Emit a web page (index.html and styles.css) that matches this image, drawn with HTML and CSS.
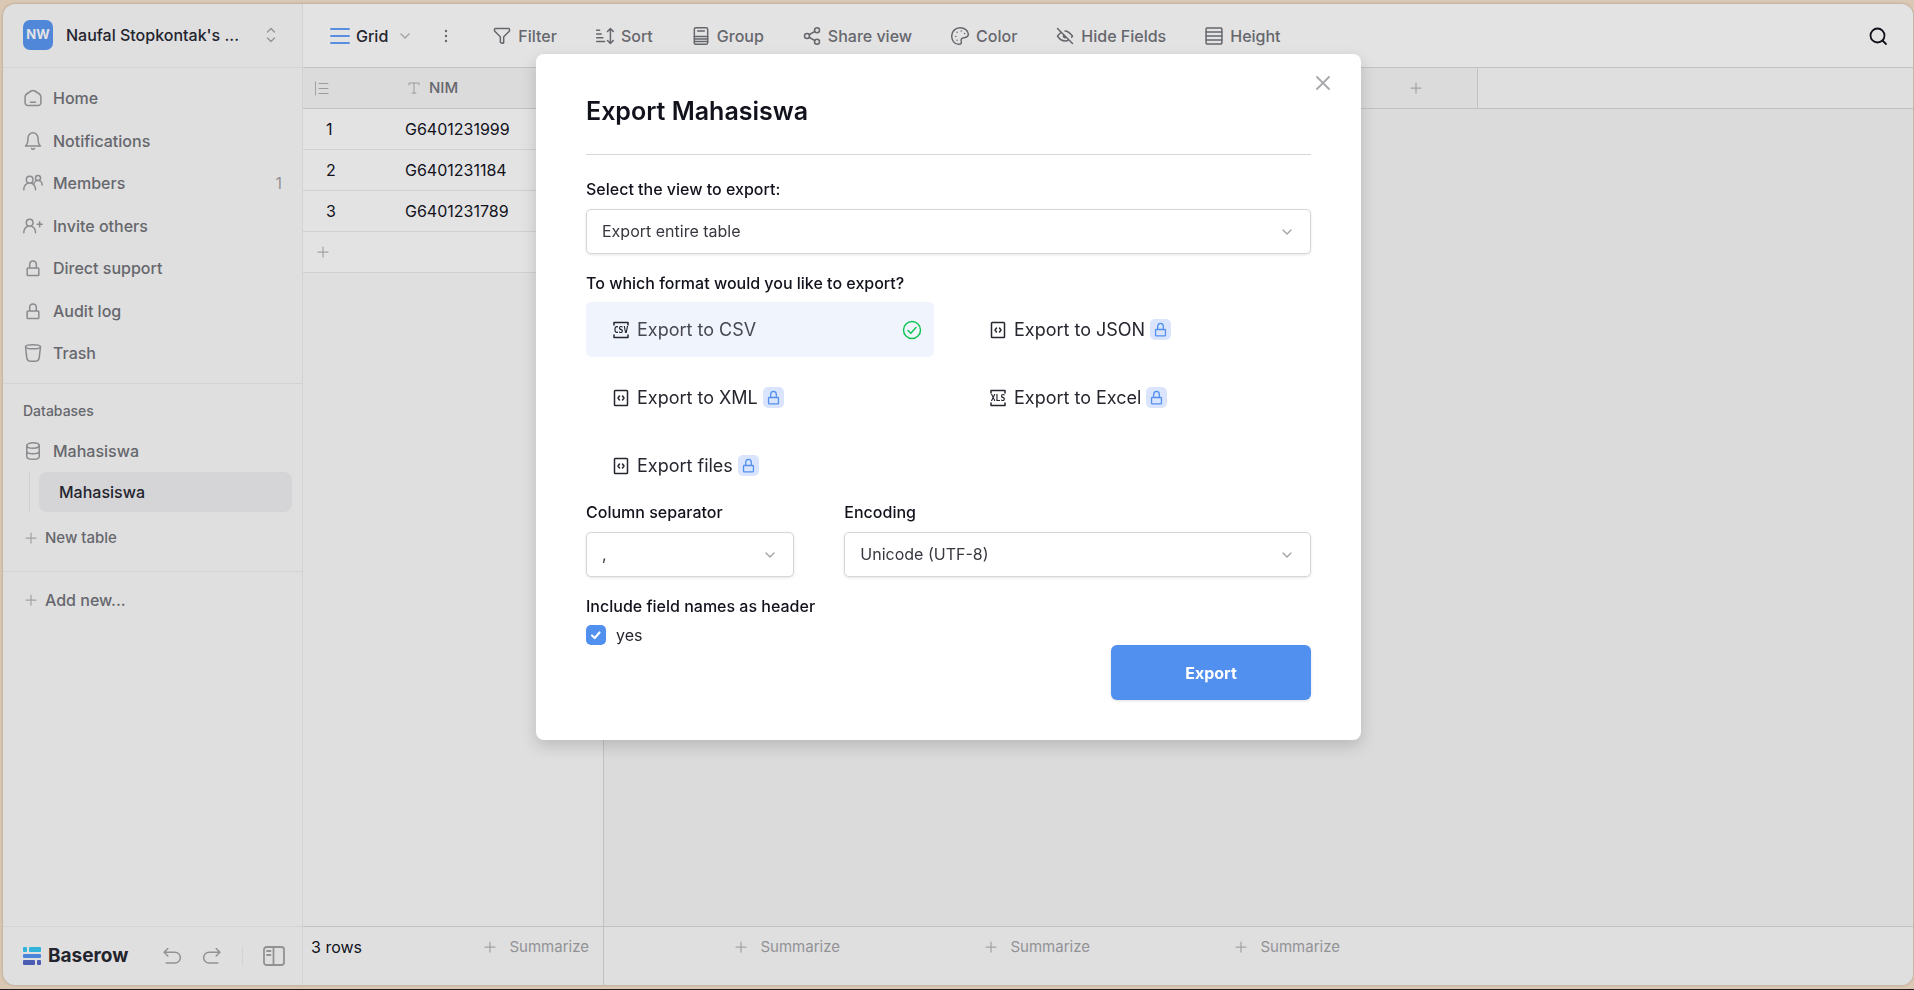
FILE: index.html
```html
<!DOCTYPE html>
<html lang="en">
<head>
<meta charset="utf-8">
<meta name="viewport" content="width=device-width, initial-scale=1">
<title>Baserow</title>
<link rel="stylesheet" href="styles.css">
</head>
<body>
<svg class="sprite" aria-hidden="true">
  <symbol id="plus" viewBox="0 0 24 24"><path d="M2 12h20M12 2v20"/></symbol>
  <symbol id="chevron" viewBox="0 0 24 24"><path d="M4 8l8 8 8-8"/></symbol>
  <symbol id="lock" viewBox="0 0 24 24"><path d="M16 12h2a1 1 0 011 1v7a1 1 0 01-1 1H6a1 1 0 01-1-1v-7a1 1 0 011-1h2m8 0V8c0-1.700-.8-4.500-4-4.500S8 6.300 8 8v4m8 0H8"/></symbol>
  <symbol id="code-file" viewBox="0 0 16 18"><rect x="1.500" y="1.500" width="13" height="15" rx=".8"/><path d="M6.500 7L5 9l1.500 2M9.500 7L11 9l-1.500 2"/></symbol>
</svg>

<div class="window">
  <aside class="sidebar">
    <button class="workspace" type="button">
      <span class="avatar">NW</span>
      <span class="workspace-name">Naufal Stopkontak's ...</span>
      <svg class="updown" viewBox="0 0 10 16"><path d="M1.500 5L5 1.500 8.500 5M1.500 11L5 14.500 8.500 11"/></svg>
    </button>

    <nav class="menu">
      <a class="menu-item" href="#"><svg class="icon" viewBox="0 0 24 24"><path d="M9 17h6M2.500 10.500v6.500a4 4 0 004 4h11a4 4 0 004-4v-6.500a4 4 0 00-1.800-3.300l-5.500-3.600a4 4 0 00-4.400 0L4.300 7.200a4 4 0 00-1.800 3.300z"/></svg>Home</a>
      <a class="menu-item" href="#"><svg class="icon" viewBox="0 0 24 24"><path d="M18 8.400c0-1.700-.6-3.300-1.800-4.500S13.600 2 12 2s-3.100.7-4.200 1.900C6.600 5.100 6 6.700 6 8.400 6 15.900 3 18 3 18h18s-3-2.100-3-9.600zM13.700 21a2 2 0 01-3.400 0"/></svg>Notifications</a>
      <a class="menu-item" href="#"><svg class="icon" viewBox="0 0 24 24"><path d="M1 20v-1a7 7 0 0114 0v1M13 14a5 5 0 0110 0v.5M8 12a4 4 0 100-8 4 4 0 000 8zM18 9a3 3 0 100-6 3 3 0 000 6z"/></svg>Members<span class="count">1</span></a>
      <a class="menu-item" href="#"><svg class="icon" viewBox="0 0 24 24"><path d="M17 10h6M20 7v6M1 20v-1a7 7 0 0114 0v1M8 12a4 4 0 100-8 4 4 0 000 8z"/></svg>Invite others</a>
      <a class="menu-item" href="#"><svg class="icon"><use href="#lock"/></svg>Direct support</a>
      <a class="menu-item" href="#"><svg class="icon"><use href="#lock"/></svg>Audit log</a>
      <a class="menu-item" href="#"><svg class="icon" viewBox="0 0 24 24"><ellipse cx="12" cy="4.500" rx="9" ry="2.500"/><path d="M3 4.500l1.500 13c.4 2.800 2.200 4.500 5 4.500h5c2.800 0 4.600-1.700 5-4.500l1.500-13"/></svg>Trash</a>
    </nav>

    <section class="databases">
      <h2 class="section-title">Databases</h2>
      <a class="menu-item" href="#"><svg class="icon" viewBox="0 0 24 24"><ellipse cx="12" cy="5.500" rx="7.500" ry="3.300"/><path d="M4.500 5.500v13c0 1.800 3.300 3.300 7.500 3.300s7.500-1.500 7.500-3.300v-13M4.500 12c0 1.800 3.300 3.300 7.500 3.300s7.500-1.500 7.500-3.300"/></svg>Mahasiswa</a>
      <div class="tables"><a class="table-link" href="#">Mahasiswa</a></div>
      <button class="add small" type="button"><svg class="plus"><use href="#plus"/></svg>New table</button>
    </section>

    <button class="add add-new" type="button"><svg class="plus"><use href="#plus"/></svg>Add new...</button>

    <footer class="sidebar-foot">
      <a class="brand" href="#">
        <svg class="logo" viewBox="0 0 18 18"><g fill="#32b3da"><rect width="4" height="5" rx="1"/><rect x="6" width="12" height="5" rx="1"/></g><rect y="7" width="18" height="4" rx="1" fill="#4b83d8"/><g fill="#4b5cb4"><rect y="13" width="12" height="5" rx="1"/><rect x="14" y="13" width="4" height="5" rx="1"/></g></svg>
        <span>Baserow</span>
      </a>
      <button class="tool" type="button" aria-label="Undo"><svg class="icon" viewBox="0 0 24 24"><path d="M7 3L2.500 7.500 7 12M3 7.500h12.500a6 6 0 010 13H5"/></svg></button>
      <button class="tool" type="button" aria-label="Redo"><svg class="icon" viewBox="0 0 24 24"><path d="M17 3l4.500 4.500L17 12M21 7.500H8.500a6 6 0 000 13H19"/></svg></button>
      <button class="tool collapse" type="button" aria-label="Collapse sidebar"><svg class="icon large" viewBox="0 0 22 20"><rect x="1" y="1" width="20" height="18" rx="2.500"/><path d="M10.500 1v18M4 5h3.500M4 9h3.500"/></svg></button>
    </footer>
  </aside>

  <main class="main">
    <header class="toolbar">
      <button class="view" type="button"><svg class="bars" viewBox="0 0 20 18"><path d="M1 2h18M1 9h18M1 16h18"/></svg>Grid<svg class="chev"><use href="#chevron"/></svg></button>
      <button class="dots" type="button" aria-label="View options"><svg viewBox="0 0 4 14"><circle cx="2" cy="2" r="1.200"/><circle cx="2" cy="7" r="1.200"/><circle cx="2" cy="12" r="1.200"/></svg></button>
      <div class="actions">
        <button type="button"><svg class="icon" viewBox="0 0 24 24"><path d="M4 3h16a1 1 0 011 1v1.600a1 1 0 01-.3.7l-6.400 6.400a1 1 0 00-.3.700v6.300a1 1 0 01-1.200 1l-2-.5a1 1 0 01-.8-1v-5.800a1 1 0 00-.3-.700L3.300 6.300A1 1 0 013 5.600V4a1 1 0 011-1z"/></svg>Filter</button>
        <button type="button"><svg class="icon" viewBox="0 0 24 24"><path d="M2 18.500h9.500M2 14h7.500M2 9.500h5.500M2 5h3.500M18.500 3v18M15 6.500L18.500 3 22 6.500M15 17.500l3.500 3.500 3.500-3.500"/></svg>Sort</button>
        <button type="button"><svg class="icon" viewBox="0 0 24 24"><rect x="4" y="2" width="16" height="20" rx="2"/><path d="M8 6h8M4 12.500h16M4 15.500h16M4 18.500h16"/></svg>Group</button>
        <button type="button"><svg class="icon" viewBox="0 0 24 24"><circle cx="18" cy="5" r="3"/><circle cx="18" cy="19" r="3"/><circle cx="6" cy="12" r="3"/><path d="M15.500 6.500l-7 4M8.500 13.500l7 4"/></svg>Share view</button>
        <button type="button"><svg class="icon" viewBox="0 0 24 24"><path d="M12 2C6.500 2 2 6.500 2 12s3.500 10 8.500 10c3 0 3.500-1.500 3-3.500-.5-2.500 0-4 3.500-4.500 3-.3 5-1.500 5-4C22 5.500 17.500 2 12 2z"/><path d="M7 12.500v.01M8.500 7.500v.01M13.500 6v.01M17.500 9v.01M8.500 17v.01"/></svg>Color</button>
        <button type="button"><svg class="icon" viewBox="0 0 24 24"><path d="M3 3l18 18M10.500 10.700a2 2 0 002.800 2.800M7.400 7.600C5.700 8.700 4.300 10.400 3 12c1.900 3 5.300 6 9 6 1.600 0 3-.5 4.400-1.400M12 6c4 0 6.700 3.200 9 6a15.700 15.700 0 01-1.100 1.500"/></svg>Hide Fields</button>
        <button type="button"><svg class="icon" viewBox="0 0 24 24"><rect x="2.500" y="2.500" width="19" height="19" rx="1"/><path d="M2.500 7.300h19M2.500 12h19M2.500 16.700h19"/></svg>Height</button>
      </div>
      <button class="search" type="button" aria-label="Search"><svg class="icon" viewBox="0 0 20 20"><circle cx="9.500" cy="9.500" r="7"/><path d="M14.500 14.500L18 18"/></svg></button>
    </header>

    <div class="grid">
      <section class="grid-left">
        <table class="rows">
          <thead><tr>
            <th class="num"><svg class="list" viewBox="0 0 15 15"><path d="M5 2.500h9M5 7.500h9M5 12.500h9"/><path stroke-dasharray="1.500 1" d="M1.500 1v13"/></svg></th>
            <th><span class="field"><svg class="field-icon" viewBox="0 0 12 12"><path d="M1 3V1h10v2M6 1v10M4 11h4"/></svg>NIM</span></th>
          </tr></thead>
          <tbody>
            <tr><td class="num">1</td><td>G6401231999</td></tr>
            <tr><td class="num">2</td><td>G6401231184</td></tr>
            <tr><td class="num">3</td><td>G6401231789</td></tr>
            <tr><td class="new-row" colspan="2"><button type="button" aria-label="Add row"><svg class="plus"><use href="#plus"/></svg></button></td></tr>
          </tbody>
        </table>
        <div class="grid-foot split"><span class="total">3 rows</span><button class="summarize" type="button"><svg class="plus"><use href="#plus"/></svg>Summarize</button></div>
      </section>
      <section class="grid-right">
        <div class="columns">
          <div class="fields"></div>
          <button class="add-field" type="button" aria-label="Add field"><svg class="plus"><use href="#plus"/></svg></button>
        </div>
        <div class="grid-foot">
          <button class="summarize" type="button"><svg class="plus"><use href="#plus"/></svg>Summarize</button>
          <button class="summarize" type="button"><svg class="plus"><use href="#plus"/></svg>Summarize</button>
          <button class="summarize" type="button"><svg class="plus"><use href="#plus"/></svg>Summarize</button>
        </div>
      </section>
    </div>
  </main>
</div>

<div class="overlay">
  <form class="modal" role="dialog" aria-labelledby="title">
    <button class="close" type="button" aria-label="Close"><svg viewBox="0 0 14 14"><path d="M1 1l12 12M13 1L1 13"/></svg></button>
    <h1 class="title" id="title">Export Mahasiswa</h1>

    <div class="control">
      <label for="view">Select the view to export:</label>
      <div class="select"><select id="view"><option>Export entire table</option></select><svg class="chev"><use href="#chevron"/></svg></div>
    </div>

    <div class="control format-control">
      <span class="label" id="format">To which format would you like to export?</span>
      <div class="formats" role="group" aria-labelledby="format">
        <button class="format selected" type="button" aria-pressed="true"><svg class="file" viewBox="0 0 16 18"><path d="M1 4V1.500h14V4M1 14v2.500h14V14"/><text x="8" y="12">CSV</text></svg><span>Export to CSV</span>
          <svg class="check" viewBox="0 0 20 20"><circle cx="10" cy="10" r="8.500"/><path d="M6 10.500l2.800 2.700L14 7.500"/></svg></button>
        <button class="format" type="button"><svg class="file"><use href="#code-file"/></svg><span>Export to JSON</span><span class="premium"><svg><use href="#lock"/></svg></span></button>
        <button class="format" type="button"><svg class="file"><use href="#code-file"/></svg><span>Export to XML</span><span class="premium"><svg><use href="#lock"/></svg></span></button>
        <button class="format" type="button"><svg class="file" viewBox="0 0 16 18"><path d="M1 4V1.500h14V4M1 14v2.500h14V14"/><text x="8" y="12">XLS</text></svg><span>Export to Excel</span><span class="premium"><svg><use href="#lock"/></svg></span></button>
        <button class="format" type="button"><svg class="file"><use href="#code-file"/></svg><span>Export files</span><span class="premium"><svg><use href="#lock"/></svg></span></button>
      </div>
    </div>

    <div class="options">
      <div class="control">
        <label for="separator">Column separator</label>
        <div class="select"><select id="separator"><option>,</option></select><svg class="chev"><use href="#chevron"/></svg></div>
      </div>
      <div class="control wide">
        <label for="encoding">Encoding</label>
        <div class="select"><select id="encoding"><option>Unicode (UTF-8)</option></select><svg class="chev"><use href="#chevron"/></svg></div>
      </div>
    </div>

    <div class="control header-control">
      <span class="label">Include field names as header</span>
      <label class="checkbox"><span class="box"><input type="checkbox" checked><svg viewBox="0 0 20 20"><path d="M6 10.500l2.700 2.500L13.500 7.500"/></svg></span>yes</label>
    </div>

    <button class="submit" type="submit">Export</button>
  </form>
</div>
</body>
</html>
```
FILE: styles.css
```css
*, *::before, *::after { box-sizing: border-box; }

html { height: 100%; }

body {
  margin: 0;
  height: 100%;
  padding: 4px 1px 4px 3px;
  background: #dbc8b4;
  border-bottom: 1px solid #1f1a1e;
  color: #11121c;
  font: 16px/20px Inter, sans-serif;
}

button, select, input { font: inherit; color: inherit; margin: 0; }
button { padding: 0; border: 0; background: none; cursor: pointer; }
a { color: inherit; text-decoration: none; }
svg { display: block; flex: none; fill: none; stroke: currentColor; stroke-linecap: round; stroke-linejoin: round; }
.sprite { position: absolute; width: 0; height: 0; }
.icon { width: 20px; height: 20px; stroke-width: 1.800; }
.plus { width: 12px; height: 12px; stroke-width: 2.500; color: #a4a4a6; }
.chev { width: 12px; height: 12px; stroke-width: 2.500; color: #a0a0a2; }

.window {
  display: flex;
  height: 100%;
  border-radius: 12px;
  overflow: hidden;
  background: #dfdfdf;
  box-shadow: 0 0 3px rgba(0, 0, 0, .25);
}

/* Sidebar */
.sidebar {
  display: flex;
  flex-direction: column;
  flex: none;
  width: 300px;
  border-right: 1px solid #d3d3d4;
  color: #66676d;
  font-weight: 500;
}
.workspace {
  display: flex;
  align-items: center;
  height: 64px;
  padding: 0 26px 1px 20px;
  border-bottom: 1px solid #d3d3d4;
  color: #23242e;
  font-weight: 500;
}
.avatar {
  width: 30px;
  height: 30px;
  margin-right: 13px;
  border-radius: 7px;
  background: #5187d9;
  color: #e3e3e3;
  font-size: 13px;
  font-weight: 700;
  line-height: 29px;
}
.workspace-name { flex: 1; text-align: left; }
.updown { width: 10px; height: 16px; color: #98989b; stroke-width: 1.500; }
.menu {
  display: flex;
  flex-direction: column;
  justify-content: space-between;
  min-height: 316px;
  padding: 10px 0;
  border-bottom: 1px solid #d3d3d4;
}
.menu-item { display: flex; align-items: center; gap: 10px; height: 40px; padding: 0 20px; }
.menu-item .icon { color: #8b8b8f; }
.count { margin-left: auto; color: #929296; font-weight: 400; }
.databases { padding: 17px 0 13px; border-bottom: 1px solid #d3d3d4; }
.section-title { margin: 0 20px 10px; font-size: 14px; font-weight: 500; line-height: 20px; }
.tables { margin: 1px 10px 6px 26px; padding-left: 9px; border-left: 1px solid #d0d0d1; }
.table-link {
  display: block;
  padding: 10px 20px;
  border-radius: 8px;
  background: #d5d5d7;
  color: #23242e;
}
.add { display: flex; align-items: center; gap: 8px; height: 40px; padding: 0 22px; font-weight: 500; }
.add.small { font-size: 15px; }
.add-new { margin-top: 8px; }
.sidebar-foot {
  display: flex;
  align-items: center;
  height: 59px;
  margin-top: auto;
  padding: 0 17px 0 20px;
  border-top: 1px solid #d3d3d4;
}
.brand { display: flex; align-items: center; gap: 7px; margin-right: auto; color: #23242e; font-size: 19px; font-weight: 700; }
.logo { width: 18px; height: 18px; stroke: none; }
.tool { margin-right: 20px; color: #929295; }
.tool.collapse { margin: 0; padding-left: 20px; border-left: 1px solid #d3d3d4; }
.icon.large { width: 22px; }

/* View header */
.main { display: flex; flex-direction: column; flex: 1; min-width: 0; }
.toolbar {
  display: flex;
  align-items: center;
  height: 64px;
  padding: 0 25px 0 27px;
  border-bottom: 1px solid #c1c1c2;
  background: #e3e3e3;
  color: #66676d;
}
.view { display: flex; align-items: center; color: #23242e; font-weight: 500; }
.bars { width: 20px; height: 18px; margin-right: 6px; color: #5a8fdf; stroke-width: 2; }
.view .chev { margin-left: 11px; }
.dots { margin: 0 44px 0 33px; }
.dots svg { width: 4px; height: 14px; fill: currentColor; stroke: none; }
.actions { display: flex; gap: 38px; flex: 1; }
.actions button { display: flex; align-items: center; gap: 6px; font-weight: 500; white-space: nowrap; }
.search { color: #11121c; }

/* Grid */
.grid { display: flex; flex: 1; min-height: 0; }
.grid-left { display: flex; flex-direction: column; flex: none; width: 301px; border-right: 1px solid #c1c1c2; }
.rows { width: 100%; border-collapse: separate; border-spacing: 0; table-layout: fixed; }
.rows th, .rows td { height: 41px; padding: 0; text-align: left; font-weight: 400; }
.rows th { border-bottom: 1px solid #c1c1c2; background: #dbdbdb; color: #66676d; }
.rows td { border-bottom: 1px solid #d0d0d1; background: #e3e3e3; }
.rows .num { width: 102px; padding-left: 23px; }
.rows th.num { padding-left: 11px; }
.rows .new-row { padding-left: 14px; }
.list { width: 15px; height: 15px; color: #9c9c9e; }
.field { display: flex; align-items: center; gap: 9px; padding-left: 3px; font-size: 15px; font-weight: 500; }
.field-icon { width: 12px; height: 12px; color: #9c9c9e; }
.grid-right { display: flex; flex-direction: column; flex: 1; min-width: 0; background: #dbdbdb; }
.columns { display: flex; height: 41px; border-bottom: 1px solid #c1c1c2; background: #dfdfdf; }
.fields { width: 750px; background: #dbdbdb; }
.add-field { display: grid; place-items: center; width: 124px; border-right: 1px solid #c1c1c2; background: #dbdbdb; }
.grid-foot { display: flex; align-items: start; height: 59px; margin-top: auto; border-top: 1px solid #c1c1c2; background: #dfdfdf; }
.grid-foot.split { justify-content: space-between; padding-left: 8px; }
.total { padding: 10px 0; }
.summarize { display: flex; align-items: center; justify-content: end; gap: 13px; width: 250px; padding: 10px 14px 10px 0; color: #929296; font-size: 15px; }
.split .summarize { width: auto; }

/* Export dialog */
.overlay { position: fixed; inset: 0; display: flex; align-items: start; justify-content: center; padding: 54px 17px 20px 0; }
.modal {
  position: relative;
  display: flex;
  flex-direction: column;
  width: 825px;
  padding: 40px 50px;
  border-radius: 8px;
  background: #fff;
  box-shadow: 0 6px 16px rgba(0, 0, 0, .16);
}
.close { position: absolute; top: 16px; right: 25px; padding: 6px; color: #a8a8aa; }
.close svg { width: 14px; height: 14px; stroke-width: 1.800; }
.title { margin: 0 0 24px; padding: 0 0 26px; border-bottom: 1px solid #d6d6d8; font-size: 25px; font-weight: 600; line-height: 34px; }
.control { display: flex; flex-direction: column; margin-bottom: 19px; }
.control > label:first-child, .label { margin-bottom: 10px; font-weight: 500; line-height: 20px; }
.label { margin-bottom: 9px; }
.select { position: relative; }
.select select {
  display: block;
  width: 100%;
  height: 45px;
  padding: 0 40px 2px 15px;
  border: 1px solid #d6d6d8;
  border-radius: 5px;
  background: #fff;
  box-shadow: 0 1px 3px rgba(0, 0, 0, .1);
  color: #37383f;
  appearance: none;
}
.select .chev { position: absolute; top: 17px; right: 18px; pointer-events: none; }
.format-control { margin-bottom: 9px; }
.formats { display: grid; grid-template-columns: 1fr 1fr; gap: 13px 29px; }
.format { display: flex; align-items: center; height: 55px; padding: 0 12px 0 27px; border-radius: 5px; color: #25262e; font-size: 18px; }
.format.selected { background: #f0f4fd; color: #46474f; }
.file { width: 16px; height: 18px; margin-right: 8px; color: #25262e; stroke-width: 1.500; }
.file text { fill: currentColor; stroke: none; font: 700 8px "DejaVu Sans Mono", monospace; text-anchor: middle; }
.check { width: 20px; height: 20px; margin-left: auto; color: #12c452; stroke-width: 1.500; }
.premium { margin-left: 5px; padding: 2px; border-radius: 5px; background: #dae4fd; color: #5190ef; }
.premium svg { width: 17px; height: 17px; stroke-width: 1.800; }
.options { display: grid; grid-template-columns: repeat(3, 1fr); column-gap: 50px; }
.wide { grid-column: span 2; }
.header-control { margin: 0; }
.checkbox { display: flex; align-items: center; gap: 10px; align-self: start; color: #25262e; }
.box { position: relative; }
.box input { display: block; width: 20px; height: 20px; border-radius: 5px; background: #5190ef; appearance: none; }
.box svg { position: absolute; inset: 0; color: #fff; stroke-width: 2.200; pointer-events: none; }
.submit {
  align-self: end;
  width: 200px;
  height: 55px;
  border-radius: 6px;
  background: #5190ef;
  box-shadow: 0 1px 3px rgba(0, 0, 0, .12);
  color: #fff;
  font-weight: 700;
}
```
